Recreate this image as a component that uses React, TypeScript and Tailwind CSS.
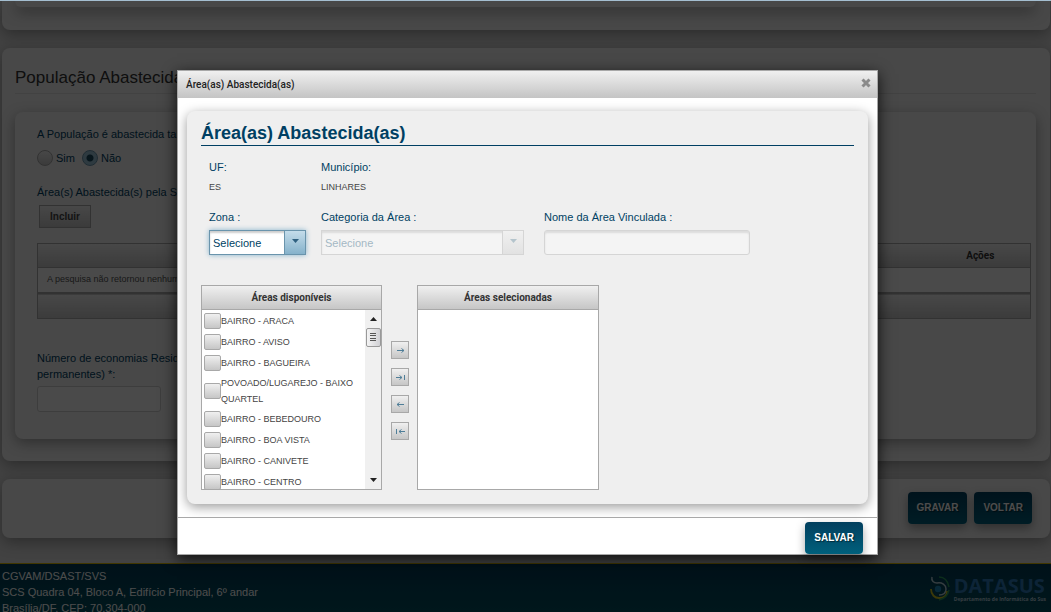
import React, { useState } from 'react';

const AREAS = [
  'BAIRRO - ARACA',
  'BAIRRO - AVISO',
  'BAIRRO - BAGUEIRA',
  'POVOADO/LUGAREJO - BAIXO QUARTEL',
  'BAIRRO - BEBEDOURO',
  'BAIRRO - BOA VISTA',
  'BAIRRO - CANIVETE',
  'BAIRRO - CENTRO',
];

const MOVES = [
  { label: 'Adicionar', d: 'M1 4.5h7M5.5 2.5l2.5 2l-2.5 2' },
  { label: 'Adicionar todos', d: 'M0 4.5h6M3.5 2.5l2.5 2l-2.5 2M8.5 2v5' },
  { label: 'Remover', d: 'M8 4.5H1M3.5 2.5l-2.5 2l2.5 2' },
  { label: 'Remover todos', d: 'M9 4.5H3M5.5 2.5l-2.5 2l2.5 2M.5 2v5' },
];

function ActionButton({ children }: { children: React.ReactNode }) {
  return (
    <button
      type="button"
      className="rounded-[4px] bg-linear-to-b from-[#023f5e] to-[#00607c] px-[9px] py-2 text-[10px] leading-4 font-bold text-white shadow-[0_4px_10px_rgba(0,0,0,0.35)] text-shadow-[1px_1px_1px_rgba(0,0,0,0.5)]"
    >
      {children}
    </button>
  );
}

function Arrow() {
  return (
    <svg width="7" height="4" viewBox="0 0 7 4" aria-hidden="true">
      <path d="M0 0h7L3.5 4z" fill="currentColor" />
    </svg>
  );
}

function PickList({ title, children }: { title: string; children?: React.ReactNode }) {
  return (
    <div className="flex h-[205px] flex-col border border-[#a8a8a8] bg-white">
      <h3 className="border-b border-[#a8a8a8] bg-linear-to-b from-[#f0f0f0] to-[#c6c6c6] text-center font-[Roboto,sans-serif] text-[10px] leading-[23px] font-bold text-[#333]">
        {title}
      </h3>
      {children}
    </div>
  );
}

function Page() {
  const [outra, setOutra] = useState('nao');

  return (
    <div className="h-full overflow-hidden">
      <div className="mr-px ml-0.5 rounded-b-lg bg-[#f0f0f0] pr-[14px] pb-[23px] pl-[13px] shadow-[0_4px_15px_rgba(0,0,0,0.35)]">
        <div className="h-[6px] rounded-b-lg bg-[#f0f0f0] shadow-[0_4px_14px_rgba(0,0,0,0.5)]" />
      </div>

      <section className="mt-[18px] mr-px ml-0.5 rounded-lg bg-[#f0f0f0] pt-[18px] pr-[14px] pb-[22px] pl-[13px] shadow-[0_4px_15px_rgba(0,0,0,0.35)]">
        <h2 className="border-b border-[#dcdcdc] pb-1 text-[17px] leading-[23px] text-[#333]">
          População Abastecida
        </h2>
        <div className="mt-[18px] rounded-lg bg-[#f0f0f0] px-[22px] pt-[14px] pb-[27px] shadow-[0_4px_14px_rgba(0,0,0,0.35)]">
          <p className="text-[11px] leading-4">A População é abastecida também</p>
          <div className="mt-2 flex items-center gap-[7px] text-[11px] leading-4">
            <label className="flex items-center gap-[3px]">
              <input
                type="radio"
                name="outra"
                checked={outra === 'sim'}
                onChange={() => setOutra('sim')}
                className="size-4 appearance-none rounded-full border border-[#a8a8a8] bg-linear-to-b from-[#f0f0f0] to-[#c6c6c6] checked:border-[#6a94ac] checked:bg-[radial-gradient(circle,#1d4a60_0_3px,#9cc2d6_4px)]"
              />
              Sim
            </label>
            <label className="flex items-center gap-[3px]">
              <input
                type="radio"
                name="outra"
                checked={outra === 'nao'}
                onChange={() => setOutra('nao')}
                className="size-4 appearance-none rounded-full border border-[#a8a8a8] bg-linear-to-b from-[#f0f0f0] to-[#c6c6c6] checked:border-[#6a94ac] checked:bg-[radial-gradient(circle,#1d4a60_0_3px,#9cc2d6_4px)]"
              />
              Não
            </label>
          </div>

          <p className="mt-[18px] text-[11px] leading-4">Área(s) Abastecida(s) pela SAA</p>
          <button
            type="button"
            className="mt-[5px] ml-0.5 block border border-[#a8a8a8] bg-linear-to-b from-[#f0f0f0] to-[#c6c6c6] px-[10px] text-[10px] leading-[21px] font-bold text-[#444]"
          >
            Incluir
          </button>

          <table className="mt-[15px] w-[calc(100%+17px)] border-collapse border border-[#a8a8a8] text-[9px]">
            <thead>
              <tr className="h-6 bg-linear-to-b from-[#f0f0f0] to-[#c6c6c6] font-[Roboto,sans-serif] text-[#333]">
                <th className="text-[10px]" />
                <th className="w-[100px] text-[10px]">Ações</th>
              </tr>
            </thead>
            <tbody>
              <tr className="h-[25px] border-t border-[#a8a8a8] bg-[#f8f8f8]">
                <td colSpan={2} className="px-[9px] text-[#555]">
                  A pesquisa não retornou nenhum
                </td>
              </tr>
            </tbody>
            <tfoot>
              <tr className="h-[26px] border-t-2 border-[#a8a8a8] bg-linear-to-b from-[#f0f0f0] to-[#c6c6c6]">
                <td colSpan={2} />
              </tr>
            </tfoot>
          </table>

          <label htmlFor="economias" className="mt-[31px] block w-[180px] text-[11px] leading-4">
            Número de economias Residenciais permanentes) *:
          </label>
          <input
            id="economias"
            className="mt-1 block h-[26px] w-[124px] rounded-[3px] border border-[#cdcdcd] bg-[#f8f8f8] px-1 text-[11px]"
          />
        </div>
      </section>

      <div className="mt-[18px] mr-px ml-0.5 flex justify-end gap-[7px] rounded-lg bg-[#f0f0f0] px-[18px] pt-[13px] pb-[14px] shadow-[0_4px_15px_rgba(0,0,0,0.35)]">
        <ActionButton>GRAVAR</ActionButton>
        <ActionButton>VOLTAR</ActionButton>
      </div>

      <footer className="mt-[25px] flex justify-between border-t border-[#d8b400] bg-linear-to-b from-[#003a55] to-[#00505f] pt-1 pr-[5px] pl-0.5 text-[11px] leading-4 text-white">
        <address className="not-italic">
          CGVAM/DSAST/SVS
          <br />
          SCS Quadra 04, Bloco A, Edifício Principal, 6º andar
          <br />
          Brasília/DF. CEP: 70.304-000
        </address>
        <div className="flex gap-1 pt-[8px]">
          <svg width="20" height="25" viewBox="0 0 20 25" fill="none" aria-hidden="true">
            <path
              d="M2 1c-1 4 2 6 5 6 5-1 9 2 9 6s-3 6-7 6"
              stroke="#b4ccd8"
              strokeWidth="1.500"
            />
            <path d="M1 13c0 6 4 9 8 9 5 0 8-3 8-7" stroke="#c8c020" strokeWidth="1.800" />
            <path
              d="M9 1c6 0 9 5 10 10M19 14c-1 5-5 9-10 10"
              stroke="#2a9a5c"
              strokeWidth="1.400"
            />
            <circle cx="8" cy="13" r="3.200" fill="#1b86b8" />
          </svg>
          <div className="font-['Open_Sans',sans-serif] font-bold">
            <div className="text-[20px] leading-5 text-[#2c78b8]">DATASUS</div>
            <div className="text-[5px] leading-[6px] text-[#b0c8d8]">
              Departamento de Informática do Sus
            </div>
          </div>
        </div>
      </footer>
    </div>
  );
}

function AreaDialog() {
  return (
    <div
      role="dialog"
      aria-labelledby="dialog-title"
      className="w-[701px] border border-[#a8a8a8] bg-white shadow-[0_4px_14px_rgba(0,0,0,0.8)]"
    >
      <div className="flex items-start justify-between bg-linear-to-b from-[#f0f0f0] to-[#c4c4c4] pr-[6px] pl-2">
        <span
          id="dialog-title"
          className="font-[Roboto,sans-serif] text-[10px] leading-[27px] font-medium text-[#222]"
        >
          Área(as) Abastecida(as)
        </span>
        <button type="button" aria-label="Fechar" className="pt-[7px]">
          <svg width="10" height="10" viewBox="0 0 10 10" aria-hidden="true">
            <path d="M1.500 1.500l7 7M8.500 1.500l-7 7" stroke="#8a8a8a" strokeWidth="3" />
          </svg>
        </button>
      </div>

      <div className="mx-[9px] mt-[13px] mb-[13px] rounded-lg bg-[#efefef] px-[14px] pt-3 pb-[14px] shadow-[0_3px_12px_rgba(0,0,0,0.4)]">
        <h1 className="border-b border-[#003f63] pb-0.5 text-[18px] leading-5 font-bold">
          Área(as) Abastecida(as)
        </h1>

        <div className="mt-[13px] grid grid-cols-[97px_203px_206px] gap-x-[15px] pl-2 text-[11px] leading-4">
          <div>
            <div>UF:</div>
            <div className="mt-1 text-[9px] text-[#444]">ES</div>
          </div>
          <div>
            <div>Município:</div>
            <div className="mt-1 text-[9px] text-[#444]">LINHARES</div>
          </div>
        </div>

        <div className="mt-[14px] flex pl-2 text-[11px] leading-4">
          <div className="w-[97px]">
            <label htmlFor="zona">Zona :</label>
            <div className="relative mt-[5px]">
              <select
                id="zona"
                className="block h-[25px] w-full appearance-none border border-[#6a94ac] bg-white px-[3px] shadow-[0_0_5px_#85b2cb,inset_0_2px_2px_rgba(0,0,0,0.2)] outline-none"
              >
                <option>Selecione</option>
              </select>
              <span className="pointer-events-none absolute inset-y-0 right-0 flex w-[22px] justify-center border border-[#6a94ac] bg-linear-to-b from-[#c4dcea] to-[#85b2cb] pt-2 text-[#2f6080]">
                <Arrow />
              </span>
            </div>
          </div>
          <div className="ml-[15px] w-[203px]">
            <label htmlFor="categoria">Categoria da Área :</label>
            <div className="relative mt-[5px]">
              <select
                id="categoria"
                disabled
                className="block h-[25px] w-full appearance-none border border-[#d5d5d5] bg-[#f4f4f4] px-[3px] text-[#a4b8c4] opacity-100 shadow-[inset_0_2px_2px_rgba(0,0,0,0.1)]"
              >
                <option>Selecione</option>
              </select>
              <span className="pointer-events-none absolute inset-y-0 right-0 flex w-[22px] justify-center border border-[#d5d5d5] bg-linear-to-b from-[#f0f0f0] to-[#e2e2e2] pt-2 text-[#b4c4cc]">
                <Arrow />
              </span>
            </div>
          </div>
          <div className="ml-5 w-[206px]">
            <label htmlFor="nome">Nome da Área Vinculada :</label>
            <input
              id="nome"
              disabled
              className="mt-[5px] block h-[25px] w-full rounded-[3px] border border-[#d5d5d5] bg-[#f4f4f4] px-1 shadow-[inset_0_2px_2px_rgba(0,0,0,0.1)]"
            />
          </div>
        </div>

        <div className="mt-[30px] grid grid-cols-[181px_35px_182px]">
          <PickList title="Áreas disponíveis">
            <div className="flex min-h-0 flex-1">
              <ul className="flex flex-1 flex-col gap-[3px] overflow-hidden pt-0.5 pl-0.5">
                {AREAS.map((area) => (
                  <li key={area} className="shrink-0">
                    <label className="flex min-h-[18px] items-center text-[9px] leading-4 text-[#444]">
                      <input
                        type="checkbox"
                        className="h-4 w-[17px] shrink-0 appearance-none rounded-[2px] border border-[#a8a8a8] bg-linear-to-b from-[#f0f0f0] to-[#c6c6c6] checked:from-[#c4dcea] checked:to-[#85b2cb]"
                      />
                      {area}
                    </label>
                  </li>
                ))}
              </ul>
              <div className="flex w-4 flex-col items-center bg-[#f0f0f0] text-[#222]">
                <span className="flex h-[18px] rotate-180 items-center">
                  <Arrow />
                </span>
                <span className="flex h-[19px] w-[15px] justify-center rounded-[2px] border border-[#999] bg-linear-to-r from-[#f4f4f4] to-[#d0d0d4]">
                  <svg width="7" height="17" viewBox="0 0 7 17" aria-hidden="true">
                    <path d="M0 4.5h6M0 6.5h6M0 9.5h6M0 11.5h6" stroke="#555" />
                  </svg>
                </span>
                <span className="mt-auto flex h-[18px] items-center">
                  <Arrow />
                </span>
              </div>
            </div>
          </PickList>
          <div className="flex flex-col gap-[9px] pt-14 pl-[9px]">
            {MOVES.map((move) => (
              <button
                key={move.label}
                type="button"
                aria-label={move.label}
                className="flex size-[18px] items-center justify-center border border-[#a8a8a8] bg-linear-to-b from-[#f0f0f0] to-[#c6c6c6]"
              >
                <svg width="9" height="9" viewBox="0 0 9 9" fill="none" aria-hidden="true">
                  <path d={move.d} stroke="#4f7e98" />
                </svg>
              </button>
            ))}
          </div>
          <PickList title="Áreas selecionadas" />
        </div>
      </div>

      <div className="flex justify-end border-t border-[#a8a8a8] pt-1 pr-[14px]">
        <ActionButton>SALVAR</ActionButton>
      </div>
    </div>
  );
}

export default function App() {
  return (
    <div className="relative h-screen overflow-hidden border-t border-[#a4bed0] bg-[#dcdcdc] font-['Liberation_Sans',Arial,sans-serif] text-[#003f63]">
      <Page />
      <div className="absolute inset-0 flex items-start justify-center bg-black/70 pt-[69px] pl-1">
        <AreaDialog />
      </div>
    </div>
  );
}
